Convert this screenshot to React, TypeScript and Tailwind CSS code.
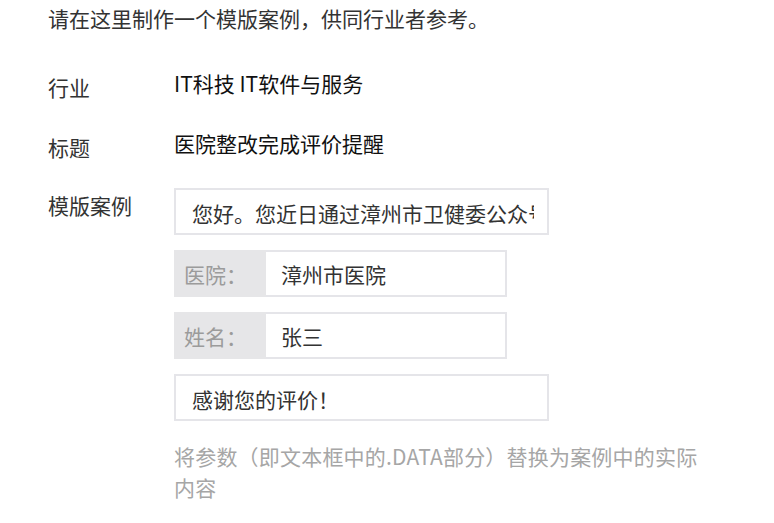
import React from 'react';

const FONT = { fontFamily: '"Noto Sans CJK SC", "Noto Sans", sans-serif' };

function TextBox({ text }: { text: string }) {
  return (
    <div className="w-[375px] h-[47px] border-2 border-[#e5e5e9] bg-white flex items-center pl-[16px] pr-[13px]">
      <span className="block whitespace-nowrap overflow-hidden text-[21px] leading-[32px] text-[#333] pt-[3px]">{text}</span>
    </div>
  );
}

function FieldRow({ label, value }: { label: string; value: string }) {
  return (
    <div className="w-[333px] h-[47px] border-2 border-[#e5e5e9] flex">
      <div className="w-[92px] -ml-[2px] -my-[2px] bg-[#e6e6e8] flex items-center pl-[10px] text-[21px] text-[#9b9b9b] shrink-0">
        <span className="pt-[2px]">{label}</span>
      </div>
      <div className="flex-1 bg-white flex items-center pl-[15px] text-[21px] text-[#333]">
        <span className="pt-[3px]">{value}</span>
      </div>
    </div>
  );
}

export default function App() {
  return (
    <div className="w-[774px] h-[523px] bg-white overflow-hidden pl-[48px]" style={FONT}>
      <p className="text-[21px] leading-[36px] text-[#333]">请在这里制作一个模版案例，供同行业者参考。</p>

      <div className="flex mt-[36px]">
        <div className="w-[126px] shrink-0 text-[21px] leading-[30px] text-[#333]">行业</div>
        <div className="text-[21px] leading-[23px] text-[#111]">IT科技 IT软件与服务</div>
      </div>

      <div className="flex mt-[30px]">
        <div className="w-[126px] shrink-0 text-[21px] leading-[30px] text-[#333]">标题</div>
        <div className="text-[21px] leading-[22px] text-[#111]">医院整改完成评价提醒</div>
      </div>

      <div className="flex mt-[26px]">
        <div className="w-[126px] shrink-0 pt-[2px] text-[21px] leading-[30px] text-[#333]">模版案例</div>
        <div className="flex flex-col">
          <div className="flex flex-col gap-[15px]">
            <TextBox text="您好。您近日通过漳州市卫健委公众号" />
            <FieldRow label="医院：" value="漳州市医院" />
            <FieldRow label="姓名：" value="张三" />
            <TextBox text="感谢您的评价！" />
          </div>
          <p className="w-[530px] mt-[20px] text-[21px] leading-[31px] text-[#a6a6a6] tracking-[0.2px]">
            将参数（即文本框中的.DATA部分）替换为案例中的实际内容
          </p>
        </div>
      </div>
    </div>
  );
}
